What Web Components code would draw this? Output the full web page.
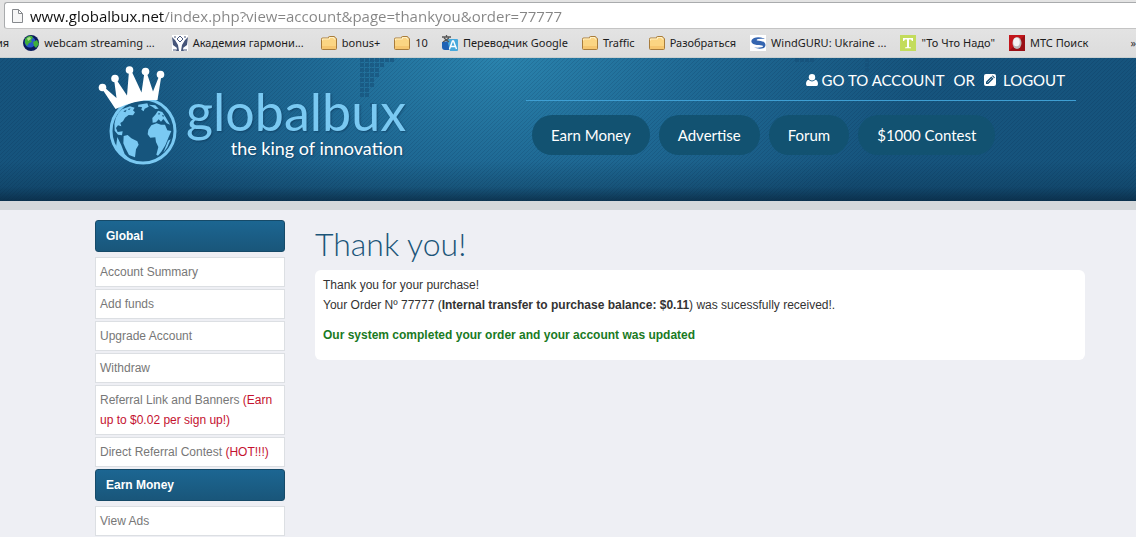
<!DOCTYPE html>
<html lang="en">

<head>
  <meta charset="UTF-8">
  <meta name="viewport" content="width=device-width, initial-scale=1.0">
  <title>GlobalBux - Thank you!</title>
  <style>
    body {
      margin: 0;
      background: #eeeff4;
      color: #333;
      font: 12px/20px "Liberation Sans", Arial, sans-serif;
    }
  </style>
</head>

<body>
  <address-bar value="www.globalbux.net/index.php?view=account&amp;page=thankyou&amp;order=77777"></address-bar>
  <bookmarks-bar>
    <book-mark>ия</book-mark>
    <book-mark icon="earth" wide>webcam streaming ...</book-mark>
    <book-mark icon="academy" wide>Академия гармони...</book-mark>
    <book-mark icon="folder">bonus+</book-mark>
    <book-mark icon="folder">10</book-mark>
    <book-mark icon="translate">Переводчик Google</book-mark>
    <book-mark icon="folder">Traffic</book-mark>
    <book-mark icon="folder">Разобраться</book-mark>
    <book-mark icon="wind">WindGURU: Ukraine ...</book-mark>
    <book-mark icon="letter">"То Что Надо"</book-mark>
    <book-mark icon="egg">МТС Поиск</book-mark>
  </bookmarks-bar>

  <site-header>
    <site-logo slot="logo"></site-logo>
    <user-links slot="user"></user-links>
    <nav-pill>Earn Money</nav-pill>
    <nav-pill>Advertise</nav-pill>
    <nav-pill>Forum</nav-pill>
    <nav-pill>$1000 Contest</nav-pill>
  </site-header>

  <page-layout>
    <side-menu slot="side" heading="Global">
      <menu-item>Account Summary</menu-item>
      <menu-item>Add funds</menu-item>
      <menu-item>Upgrade Account</menu-item>
      <menu-item>Withdraw</menu-item>
      <menu-item note="(Earn up to $0.02 per sign up!)">Referral Link and Banners</menu-item>
      <menu-item note="(HOT!!!)">Direct Referral Contest</menu-item>
    </side-menu>
    <side-menu slot="side" heading="Earn Money">
      <menu-item>View Ads</menu-item>
    </side-menu>
    <message-panel heading="Thank you!">
      <div>Thank you for your purchase!</div>
      <div>Your Order Nº 77777 (<b>Internal transfer to purchase balance: $0.11</b>) was sucessfully received!.</div>
      <b slot="status">Our system completed your order and your account was updated</b>
    </message-panel>
  </page-layout>

  <script>
    const ICONS = {
      earth: `<circle cx="8" cy="8" r="8" fill="#0a1a5c"/><circle cx="7" cy="7" r="5.500" fill="#2857c8"/>
        <path d="M2 4q3-4 7-3l1 2-2 2 1 2-3 1-2 3-2-3zM10 7l4-2 2 4-3 4-2-2z" fill="#3fae3a"/><path d="M4 3l3-1 1 2-3 2z" fill="#a8e08a"/>`,
      academy: `<path fill="#fff" d="M0 0h16v16H0z"/><path d="M8 1l3 3-3 3-3-3z" fill="none" stroke="#4a5a80"/>
        <path d="M0 2l3 3 3 5 1 6H4l1-3-4-3zM16 2l-3 3-3 5-1 6h3l-1-3 4-3z" fill="#465579"/><path d="M1 15h3M12 15h3M3 1v2M13 1v2" stroke="#465579"/>`,
      folder: `<path d="M.5 4.500v9q0 1 1 1h13q1 0 1-1V4q0-1-1-1H14V2.500q0-1-1-1H8.500q-1 0-1 1V3h-6q-1 0-1 1z" fill="#fbd583" stroke="#a87c3c"/>
        <path d="M1.500 5.500V4h7V2.500H13V4h1.500" fill="none" stroke="#fff0c4"/><path d="M1 11h14v3H1z" fill="#f4bd62" opacity=".6"/>`,
      translate: `<path d="M0 7l7-1v9H3q-3 0-3-3z" fill="#1f62b5"/><path d="M5 4h10q1 0 1 1v10q0 1-1 1H8z" fill="#48a9dc"/>
        <path d="M7.500 14L10.500 6h1l3 8M8.500 11.500h5" fill="none" stroke="#fff" stroke-width="1.400"/><path d="M0 2h9M4.500 0v2M2 3l5 4M7 3L1 7" fill="none" stroke="#555" stroke-width="1.300"/>`,
      wind: `<path fill="#fff" d="M0 0h16v16H0z"/><path d="M15 4Q9 1 4 3 0 5 2 8q2 2 7 2 4 0 4 1.500-1 1.500-9 1 5 2 10 .5 3-3 0-6-3-1.500-7-1.500Q6 5 8 4q3-.7 7 0z" fill="#3565b0"/>`,
      letter: `<path fill="#c3dc5c" d="M0 0h16v16H0z"/><path d="M3 3h10v3h-1l-1-1.500H9V12l2 .5v.8H5v-.8l2-.5V4.500H5L4 6H3z" fill="#fff"/>`,
      egg: `<path fill="#c3161c" d="M0 0h16v16H0z"/><path fill="#7d0d12" d="M16 0v16H0z" opacity=".6"/>
        <ellipse cx="8" cy="8" rx="4.500" ry="6" fill="#bbb"/><ellipse cx="7.500" cy="7" rx="3.300" ry="4.300" fill="#f4f4f4"/>`,
    };

    class AddressBar extends HTMLElement {
      constructor() {
        super();
        this.attachShadow({ mode: 'open' });
        this.shadowRoot.innerHTML = `
          <style>
            :host { display: block; background: #e4e4e4; padding: 2px 0 0 4px; }
            .field {
              display: flex;
              align-items: center;
              gap: 6px;
              height: 25px;
              padding-left: 6px;
              background: #fff;
              border: 1px solid #a9abad;
              border-bottom-color: #c4c4c4;
              border-right: 0;
              border-radius: 3px 0 0 3px;
            }
            svg { flex: none; }
            input {
              flex: 1;
              min-width: 0;
              height: 24px;
              padding: 0;
              border: 0;
              outline: 0;
              font: 15px/24px "Open Sans", "Noto Sans", sans-serif;
              /* host name dark, the rest of the address grey */
              background: linear-gradient(90deg, #111 134px, #858585 134px);
              -webkit-background-clip: text;
              background-clip: text;
              -webkit-text-fill-color: transparent;
            }
          </style>
          <div class="field">
            <svg width="13" height="16" viewBox="0 0 13 16"><path d="M1.500 1.500h6l4 4v9h-10zM7.500 1.500v4h4" fill="#f6f6f6" stroke="#85888c" stroke-linejoin="round"/></svg>
            <input type="text" aria-label="Address" spellcheck="false">
          </div>
        `;
        this.shadowRoot.querySelector('input').value = this.getAttribute('value');
      }
    }

    class BookmarksBar extends HTMLElement {
      constructor() {
        super();
        this.attachShadow({ mode: 'open' });
        this.shadowRoot.innerHTML = `
          <style>
            :host {
              display: flex;
              align-items: center;
              justify-content: space-between;
              height: 29px;
              background: linear-gradient(#e3e3e3, #dcdcdc);
              border-bottom: 1px solid #c9cfd0;
              box-sizing: border-box;
            }
            /* the first bookmark runs in from the left edge */
            .list { display: flex; gap: 14px; margin-left: -4px; }
            button { padding: 0; border: 0; background: none; color: #333; font: 11px/16px "Noto Sans", sans-serif; }
          </style>
          <div class="list"><slot></slot></div>
          <button aria-label="More bookmarks">»</button>
        `;
      }
    }

    class BookMark extends HTMLElement {
      constructor() {
        super();
        this.attachShadow({ mode: 'open' });
        const icon = ICONS[this.getAttribute('icon')];
        this.shadowRoot.innerHTML = `
          <style>
            :host { display: block; flex: none; }
            :host([wide]) { margin-right: 3px; }
            a {
              display: flex;
              align-items: center;
              gap: 5px;
              color: #1c1c1c;
              font: 11px/16px "Noto Sans", "Open Sans", sans-serif;
              text-decoration: none;
              white-space: nowrap;
            }
          </style>
          <a href="#">${icon ? `<svg width="16" height="16" viewBox="0 0 16 16" aria-hidden="true">${icon}</svg>` : ''}<slot></slot></a>
        `;
      }
    }

    class SiteHeader extends HTMLElement {
      constructor() {
        super();
        this.attachShadow({ mode: 'open' });
        this.shadowRoot.innerHTML = `
          <style>
            :host {
              display: flex;
              justify-content: space-between;
              position: relative;
              box-sizing: border-box;
              min-height: 152px;
              padding: 0 60px 0 95px;
              border-bottom: 9px solid #d4d8db;
              background:
                linear-gradient(transparent 72%, rgba(8, 38, 62, .25) 90%, rgba(8, 38, 62, .75)) 0 0 / auto padding-box,
                linear-gradient(135deg, rgba(0, 20, 50, .12) 12.5%, transparent 12.5% 50%, rgba(0, 20, 50, .12) 50% 62.5%, transparent 62.5%) 0 0 / 4px 4px padding-box,
                radial-gradient(ellipse 420px 230px at 44% 0, #2a83ad, #1f6a95 45%, #16547d) 0 0 / auto padding-box;
            }
            .dots { position: absolute; left: 360px; top: 0; }
            .right { display: flex; flex-direction: column; width: 550px; position: relative; }
            .user { display: flex; justify-content: flex-end; height: 42px; border-bottom: 1px solid #3f9fd3; padding-right: 11px; }
            nav { display: flex; gap: 9px; padding: 14px 6px; }
          </style>
          <svg class="dots" width="540" height="60" aria-hidden="true">
            <defs><pattern id="p" width="5" height="5" patternUnits="userSpaceOnUse"><path d="M0 0h4v4H0z" fill="#154f78"/></pattern></defs>
            <path d="M0 0h35v5h-10v5h-5v10h-5v10h-5v10H0zM10 45h5v5h-5zM435 0h20v5h-20zM505 0h5v15h-5z" fill="url(#p)" opacity=".6"/>
          </svg>
          <slot name="logo"></slot>
          <div class="right">
            <div class="user"><slot name="user"></slot></div>
            <nav><slot></slot></nav>
          </div>
        `;
      }
    }

    class SiteLogo extends HTMLElement {
      constructor() {
        super();
        this.attachShadow({ mode: 'open' });
        this.shadowRoot.innerHTML = `
          <style>
            :host { display: block; position: relative; padding-top: 6px; }
            a { display: flex; gap: 6px; color: #7ac9f2; text-decoration: none; }
            svg { flex: none; }
            .text { display: flex; flex-direction: column; align-items: flex-end; padding-top: 20px; text-shadow: 1px 1px 2px rgba(0, 30, 60, .4); }
            .name { font: 52px/54px Lato, sans-serif; }
            .motto { font: 18px/20px Lato, sans-serif; color: #fff; padding-right: 3px; }
          </style>
          <a href="#">
            <svg width="85" height="104" viewBox="95 64 85 104" aria-hidden="true">
              <circle cx="143" cy="131" r="32" fill="#16557d" stroke="#7ac9f2" stroke-width="3"/>
              <g transform="translate(94 62) scale(.3333)">
                <path fill="#7ac9f2" d="M62 206Q56 165 84 142L108 133 122 137 117 145 123 151 117 160 104 159 93 167 87 178 79 183 82 193 72 190 66 198 71 210 86 208 84 220 72 218z
                  M89 222L101 219 112 229 130 238 134 248 126 262 123 286 105 279 94 258 88 244z
                  M70 225L82 250 92 276 108 292 84 282 66 255z
                  M133 128L160 124 164 134 152 140 149 148 142 143 144 135 132 134z
                  M164 128L184 130 194 140 184 141 176 135z
                  M163 203L172 190 188 184 201 188 213 188 220 205 232 207 222 230 214 250 202 269 192 281 187 278 193 255 186 240 184 226 169 227 161 217z
                  M176 182L175 168 184 158 192 146 205 150 216 167 228 188 218 184 208 171 201 179 194 172 186 181z
                  M222 236L230 232 220 256 208 272z"/>
                <path fill="#16557d" d="M88 148l10-5-4 8zM102 141l8-2-5 6zM193 152l6 3-5 4zM204 158l7 3-4 4zM68 199l8 3-3 3z"/>
              </g>
              <g fill="#fff">
                <path d="M115.500 109L101.500 88l2-1.500L116.500 98 114 79h2L127 95.500 129 71h2.500L141.500 92.500 144.500 72h2L153 91.500 159.500 75h2L157.500 100Q136 99 115.500 109z"/>
                <circle cx="102.500" cy="87.500" r="3.800"/><circle cx="115" cy="78.500" r="3.800"/><circle cx="129.500" cy="70" r="3.800"/>
                <circle cx="145.500" cy="71.500" r="3.800"/><circle cx="160.500" cy="74.500" r="3.800"/>
              </g>
            </svg>
            <span class="text"><span class="name">globalbux</span><span class="motto">the king of innovation</span></span>
          </a>
        `;
      }
    }

    class UserLinks extends HTMLElement {
      constructor() {
        super();
        this.attachShadow({ mode: 'open' });
        this.shadowRoot.innerHTML = `
          <style>
            :host { display: flex; gap: 9px; color: #fff; font: 15px/20px Lato, sans-serif; padding-top: 12px; }
            a { display: flex; align-items: center; height: 20px; gap: 4px; color: inherit; text-decoration: none; }
            a.out { gap: 7px; }
          </style>
          <a href="#">
            <svg width="12" height="12" viewBox="0 0 12 12" fill="#fff"><circle cx="6" cy="3.200" r="3.200"/><path d="M2.500 5.800Q0 6.500 0 10q0 2 1.500 2h9Q12 12 12 10q0-3.500-2.500-4.200Q6 9 2.500 5.800z"/></svg>
            GO TO ACCOUNT
          </a>
          <span>OR</span>
          <a href="#" class="out">
            <svg width="12" height="12" viewBox="0 0 12 12"><rect width="12" height="12" rx="2" fill="#fff"/><path d="M2 10V7.800L7.300 2.500l2.200 2.200L4.200 10zM8 1.900l.7-.6 2.200 2.200-.7.700z" fill="#174f75"/><path d="M3.500 8.500l4-4" stroke="#fff" stroke-width=".6"/></svg>
            LOGOUT
          </a>
        `;
      }
    }

    class NavPill extends HTMLElement {
      constructor() {
        super();
        this.attachShadow({ mode: 'open' });
        this.shadowRoot.innerHTML = `
          <style>
            :host { display: block; }
            a {
              display: block;
              padding: 10px 19px;
              border-radius: 20px;
              background: #125271;
              color: #fff;
              font: 15px/20px Lato, sans-serif;
              text-decoration: none;
              white-space: nowrap;
            }
          </style>
          <a href="#"><slot></slot></a>
        `;
      }
    }

    class PageLayout extends HTMLElement {
      constructor() {
        super();
        this.attachShadow({ mode: 'open' });
        this.shadowRoot.innerHTML = `
          <style>
            :host { display: grid; grid-template-columns: 190px 1fr; gap: 30px; padding: 10px 51px 0 95px; }
            aside { display: flex; flex-direction: column; gap: 2px; }
          </style>
          <aside><slot name="side"></slot></aside>
          <main><slot></slot></main>
        `;
      }
    }

    class SideMenu extends HTMLElement {
      constructor() {
        super();
        this.attachShadow({ mode: 'open' });
        this.shadowRoot.innerHTML = `
          <style>
            :host { display: flex; flex-direction: column; gap: 2px; }
            h3 {
              margin: 0 0 3px;
              padding: 5px 10px;
              border: 1px solid #164a68;
              border-radius: 3px;
              background: linear-gradient(#1c6692, #19567a);
              color: #fff;
              font-size: 12px;
              line-height: 20px;
            }
          </style>
          <h3>${this.getAttribute('heading')}</h3>
          <slot></slot>
        `;
      }
    }

    class MenuItem extends HTMLElement {
      constructor() {
        super();
        this.attachShadow({ mode: 'open' });
        const note = this.getAttribute('note');
        this.shadowRoot.innerHTML = `
          <style>
            :host { display: block; }
            a {
              display: block;
              padding: 4px;
              border: 1px solid #dcdfe3;
              background: #fff;
              color: #777;
              text-decoration: none;
            }
            .note { color: #c4122f; }
          </style>
          <a href="#"><slot></slot>${note ? ` <span class="note">${note}</span>` : ''}</a>
        `;
      }
    }

    class MessagePanel extends HTMLElement {
      constructor() {
        super();
        this.attachShadow({ mode: 'open' });
        this.shadowRoot.innerHTML = `
          <style>
            :host { display: block; }
            h1 { margin: 0; padding: 4px 0 6px; color: #1b5578; font: 300 32px/40px Lato, sans-serif; }
            .box { padding: 5px 8px 15px; border-radius: 6px; background: #fff; }
            p { margin: 10px 0 0; color: #1a7a1f; }
          </style>
          <h1>${this.getAttribute('heading')}</h1>
          <div class="box">
            <slot></slot>
            <p><slot name="status"></slot></p>
          </div>
        `;
      }
    }

    customElements.define('address-bar', AddressBar);
    customElements.define('bookmarks-bar', BookmarksBar);
    customElements.define('book-mark', BookMark);
    customElements.define('site-header', SiteHeader);
    customElements.define('site-logo', SiteLogo);
    customElements.define('user-links', UserLinks);
    customElements.define('nav-pill', NavPill);
    customElements.define('page-layout', PageLayout);
    customElements.define('side-menu', SideMenu);
    customElements.define('menu-item', MenuItem);
    customElements.define('message-panel', MessagePanel);
  </script>
</body>

</html>
